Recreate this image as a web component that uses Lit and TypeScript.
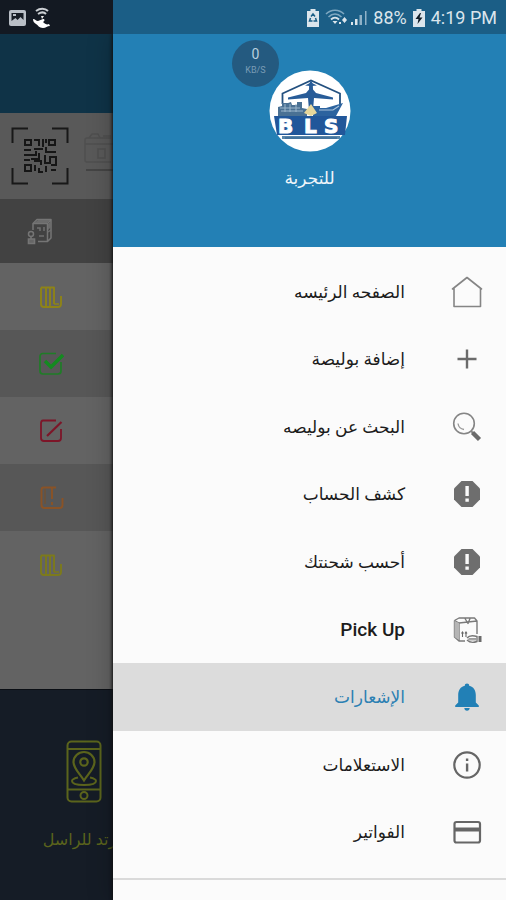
import { LitElement, html, css, svg, nothing } from "lit";
import { customElement } from "lit/decorators.js";
import { classMap } from "lit/directives/class-map.js";

const icon = (w: number, h: number, body: unknown) =>
  html`<svg class="icon" width=${w} height=${h} viewBox="0 0 ${w} ${h}" fill="none" aria-hidden="true">${body}</svg>`;

const alertIcon = icon(32, 32, svg`
  <path d="M10.500 3h11l7.500 7.500v11L21.500 29h-11L3 21.500v-11z" fill="#6e6e6e"/>
  <path d="M14.400 8h3.400v10h-3.400zM14.400 20.500h3.400v3.300h-3.400z" fill="#fafafa"/>`);

const menuIcons = {
  home: icon(32, 32, svg`
    <path d="M1.500 13 16 1.500 30.500 13M3 12v18.500h26.500V12" stroke="#858585" stroke-width="1.600" stroke-linejoin="round" stroke-linecap="round"/>`),
  plus: icon(32, 32, svg`<path d="M16 6.500v19M6.500 16h19" stroke="#6b6b6b" stroke-width="2.400"/>`),
  search: icon(32, 32, svg`
    <circle cx="13" cy="12.500" r="10.300" stroke="#858585" stroke-width="1.600"/>
    <path d="M7 12.500c.500 3.500 2.500 5.500 6 6" stroke="#999" stroke-width="1.300"/>
    <path d="m20 20 3 3" stroke="#858585" stroke-width="1.800"/>
    <path d="m21.500 21.500 7 7" stroke="#6b6b6b" stroke-width="4.400"/>`),
  alert: alertIcon,
  box: icon(32, 32, svg`
    <path d="M3.500 6.500 8 4h15.500L26 7v13M3.500 6.500V23l4.500 4h6M3.500 6.500 8 9l18-2M8 9v18M14 4.500l3 5 2-5" stroke="#7a7a7a" stroke-width="1.400" stroke-linejoin="round"/>
    <path d="M3.500 7 8 9v17l-4.500-3z" fill="#b5b5b5"/>
    <path d="M11.500 18v5M15 18v5M10.500 19.500l1-1.500 1 1.500M14 19.500l1-1.500 1 1.500" stroke="#666" stroke-width="1.100"/>
    <path d="M16 24c2-2.500 5-3 10-1.500v5c-4 1.500-8 .500-10-1.500M18 25h7" stroke="#777" stroke-width="1.400"/>
    <path d="M17 24.500h8v2h-8z" fill="#a5a5a5"/>
    <path d="M27.500 22h3v6h-3z" fill="#6b6b6b"/>`),
  bell: icon(32, 32, svg`
    <path d="M16 2.500c1.300 0 2.200.900 2.200 2.200 4.300 1 6.600 4.500 6.600 9.300v7.500l3 3v1.500H4.200v-1.500l3-3V14c0-4.800 2.300-8.300 6.600-9.300 0-1.300.900-2.200 2.200-2.200z" fill="#2280b6"/>
    <path d="M13.300 27h5.400c0 1.600-1.200 2.700-2.700 2.700s-2.700-1.100-2.700-2.700z" fill="#2280b6"/>`),
  info: icon(32, 32, svg`
    <circle cx="16" cy="16" r="12.700" stroke="#666" stroke-width="2.200"/>
    <path d="M14.900 14.500h2.400v8h-2.400zM14.900 9.500h2.400v2.500h-2.400z" fill="#666"/>`),
  card: icon(32, 32, svg`
    <rect x="3.500" y="6" width="25.500" height="20.500" rx="2" stroke="#666" stroke-width="2.200"/>
    <path d="M3.500 13.500H29" stroke="#666" stroke-width="4"/>`),
};

interface MenuItem {
  label: string;
  icon: keyof typeof menuIcons;
  active?: boolean;
}

const menu: MenuItem[] = [
  { label: "الصفحه الرئيسه", icon: "home" },
  { label: "إضافة بوليصة", icon: "plus" },
  { label: "البحث عن بوليصه", icon: "search" },
  { label: "كشف الحساب", icon: "alert" },
  { label: "أحسب شحنتك", icon: "alert" },
  { label: "Pick Up", icon: "box" },
  { label: "الإشعارات", icon: "bell", active: true },
  { label: "الاستعلامات", icon: "info" },
  { label: "الفواتير", icon: "card" },
];

const boardIcon = (color: string) => icon(26, 26, svg`
  <path d="M3 3.500h13V20M3 3.500V20q0 3 3 3h14q3 0 3-3v-8M8 4v18M12 4v18" stroke=${color} stroke-width="1.900" stroke-linejoin="round"/>
  <path d="M16 20h5" stroke=${color} stroke-width="1.500"/>`);

const rowIcons = [
  boardIcon("#8e8318"),
  icon(26, 26, svg`
    <path d="M18 2.500H5q-3 0-3 3V20q0 3 3 3h15q3 0 3-3v-9" stroke="#1f7d27" stroke-width="1.700"/>
    <path d="m7 10 6 6L25 4" stroke="#148a20" stroke-width="3.400"/>`),
  icon(26, 26, svg`
    <path d="M18 2.500H5q-2 0-2 3V20q0 3 3 3h14q3 0 3-3V11" stroke="#7d1528" stroke-width="1.800"/>
    <path d="M9 18 23.500 4" stroke="#7d1528" stroke-width="2.200"/>`),
  icon(26, 26, svg`
    <path d="M18 2.500H5.500q-2 0-2 2.500v15q0 3 3 3h15q3 0 3-3v-7M14 3v11M14 17v3" stroke="#8a5326" stroke-width="1.900"/>
    <path d="M7 4v15" stroke="#74512f" stroke-width="1.200"/>`),
  boardIcon("#7c7a1c"),
];

const qrIcon = icon(58, 58, svg`
  <path d="M1.500 16V1.500H17M41 1.500h15.500V16M56.500 41v15.500H41M17 56.500H1.500V41" stroke="#181818" stroke-width="2"/>
  <g stroke="#161616" stroke-width="2">
    <rect x="14" y="13" width="6" height="5"/><rect x="38" y="13" width="6" height="5"/><rect x="14" y="38" width="6" height="6"/>
    <path d="M23 13h5v6M32 12v8M35 12v4M13 23h7M23 22h9M35 20v5h10M13 28h12v-4M28 26v6h-8M13 33h6M23 34h7v4M34 28v8h5v-6h6v8h-5M24 38v6M28 41v4h4M35 39v6M40 43h5"/>
  </g>`);

const parcelIcon = icon(30, 48, svg`
  <path d="M2 28V8q0-2 2-2h24M2 12h28M6 6l3-4h6l2 4M20 4h8M2 28q0 2 2 2h24M15 17h7v9h-7z" stroke="#4f4f4f" stroke-width="1.500"/>
  <path d="M3 38h27" stroke="#444" stroke-width="2"/>`);

const boxHeadIcon = icon(28, 28, svg`
  <path d="M7 13V6.500l4-4h14V21l-3.500 3.500H12M7 6.500h14.500v18M21.500 6.500l3.500-4" stroke="#757575" stroke-width="1.500" stroke-linejoin="round"/>
  <path d="m8 6 4-3h12l-3 3zM22 7l3-3v6l-3 3z" fill="#6c6c6c"/>
  <path d="M11 11h3v3M18 10v4M13 19h5M22 15l3-2" stroke="#707070" stroke-width="1.500"/>
  <circle cx="5" cy="17" r="2.500" stroke="#757575" stroke-width="1.500"/>
  <path d="M5 19v3M2.500 22h6v4.500h-6z" stroke="#757575" stroke-width="1.600" fill="#666"/>`);

const phoneIcon = icon(36, 64, svg`
  <rect x="1.500" y="1.500" width="33" height="60" rx="4" stroke="#5b641c" stroke-width="2"/>
  <path d="M2 9h32M2 49.500h32" stroke="#5b641c" stroke-width="2"/>
  <circle cx="18" cy="55.500" r="3.500" stroke="#5b641c" stroke-width="2"/>
  <circle cx="18" cy="22" r="3.700" stroke="#5b641c" stroke-width="2.200"/>
  <path d="M18 40.500C14 34 7.500 28.500 7.500 22a10.500 10 0 0 1 21 0C28.500 28.500 22 34 18 40.500z" stroke="#5b641c" stroke-width="2.200"/>
  <path d="M12 37.500c-3.500.800-6 1.800-6 3.500 0 2.500 5 4 12 4s12-1.500 12-4c0-1.700-2.500-2.700-6-3.500" stroke="#5b641c" stroke-width="2"/>`);

const logo = html`<svg class="logo" width="82" height="82" viewBox="0 0 82 82" role="img" aria-label="BLS">
  <circle cx="41" cy="41" r="40.500" fill="#fff"/>
  <path d="M13.500 34V23.500L42 10.500l29 13V34" fill="none" stroke="#23507f" stroke-width="1.800"/>
  <path d="M42 10.500c1.500 1.500 2 4 2 9l3 3.500 17 4.500v2L45 28l-1 12h-4l-1-12-20 1.500v-2L37 23l3-3.500c0-5 .500-7.500 2-9z" fill="#285c98"/>
  <path d="M36 15.500 41 13v3zM48 15.500 43 13v3z" fill="#285c98"/>
  <path d="M9 46V37l4-1v-3h6l3-1 1 3h5v-3h5v6l5 1v9H9z" fill="#4a7194"/>
  <path d="M11 38h20M12 41h22M16 34v8M21 34v8M27 34v8" stroke="#9bb7cc" stroke-width="1"/>
  <path d="M44 46V36h7v2h6l17-5-7 13z" fill="#2c639f"/>
  <path d="M50 40h14l6-4" stroke="#a9c3dc" stroke-width="1.200" fill="none"/>
  <path d="m35 43 7-9 6 9-6 3z" fill="#e7d79b"/>
  <path d="M5 46h73l-2 19H8z" fill="#21579a"/>
  <path d="M13 66h58v3H13z" fill="#5986aa"/>
  <path d="M16 68h52" stroke="#2f6090" stroke-width="1"/>
  <text class="logo-text" x="9 35 55" y="63">BLS</text>
</svg>`;

@customElement("app-root")
export class AppRoot extends LitElement {
  static styles = css`
    :host {
      display: grid;
      grid-template-columns: 113px minmax(0, 1fr);
      grid-template-rows: 34px 1fr;
      min-height: 100vh;
      background: #fbfbfb;
      font-family: Roboto, "DejaVu Sans", sans-serif;
    }
    .icon, .logo { display: block; flex: none; }
    .logo { direction: ltr; }

    .status {
      grid-column: 1 / -1;
      display: flex;
      align-items: center;
      justify-content: space-between;
      padding: 2px 9px 0 8px;
      background: linear-gradient(to right, #131922 113px, #1b5e86 113px);
      color: #dbe5ec;
      font-size: 18px;
      line-height: 32px;
    }
    .status-group { display: flex; align-items: center; gap: 6px; }

    .screen {
      display: flex;
      flex-direction: column;
      overflow: hidden;
      background: #636363;
    }
    .appbar { flex: none; height: 79px; background: #0f3347; }
    .tools {
      display: flex;
      align-items: center;
      gap: 14px;
      height: 86px;
      padding-left: 11px;
      background: #595959;
    }
    .cell {
      display: flex;
      align-items: center;
      height: 67px;
      padding-left: 38px;
    }
    .cell.head { height: 64px; padding-left: 26px; background: #424242; }
    .cell.alt { background: #575757; }
    .tile {
      flex: 1;
      display: flex;
      flex-direction: column;
      align-items: center;
      gap: 22px;
      width: calc(100vw / 3);
      margin-top: 92px;
      padding-top: 50px;
      box-sizing: border-box;
      background: #151c26;
      box-shadow: 0 -1px 0 #0a0e14;
      color: #5b641c;
      font-size: 16px;
      line-height: 28px;
      text-decoration: none;
      white-space: nowrap;
    }

    .drawer {
      position: relative;
      background: #fbfbfb;
      box-shadow: 0 0 3px 1px #111, 0 0 24px rgba(0, 0, 0, 0.25);
      clip-path: inset(0 0 0 -40px);
    }
    .profile {
      display: flex;
      flex-direction: column;
      align-items: center;
      height: 213px;
      box-sizing: border-box;
      padding-top: 36px;
      background: #2380b5;
      color: #eef5fa;
      font-size: 17px;
      line-height: 28px;
    }
    .profile-name { margin-top: 12px; }
    .logo-text {
      font: bold 20px "DejaVu Sans", sans-serif;
      fill: #fff;
      stroke: #fff;
      stroke-width: 1px;
    }
    .speed {
      position: absolute;
      top: 6px;
      left: 119px;
      display: flex;
      flex-direction: column;
      align-items: center;
      width: 47px;
      height: 47px;
      box-sizing: border-box;
      padding-top: 6px;
      border-radius: 50%;
      background: #245a80;
      color: #b9cfde;
      font-size: 14px;
      line-height: 16px;
    }
    .speed-unit { color: #7a9cb5; font-size: 9px; line-height: 16px; }

    .menu {
      display: grid;
      grid-auto-rows: 1fr;
      height: 608px;
      margin: 11px 0 12px;
      padding: 0;
      list-style: none;
    }
    .item {
      display: flex;
      align-items: center;
      gap: 46px;
      height: 100%;
      box-sizing: border-box;
      padding: 0 23px;
      color: #1c1c1c;
      font-size: 17px;
      line-height: 28px;
      text-decoration: none;
    }
    .item.latin { font-size: 19px; font-weight: 500; }
    .item.active { background: #dcdcdc; color: #2b80b3; }
    .divider { height: 0; margin: 0; border: 0; border-top: 2px solid #dadada; }
  `;

  render() {
    return html`
      <header class="status">
        <div class="status-group">
          ${icon(18, 18, svg`
            <rect x="1" y="1" width="17" height="16" rx="2" fill="#b9bfc6"/>
            <path d="M3.500 4h12v7l-3-3-3 3-2-2-4 3z" fill="#161c24"/><path d="M5 5h3v2H5z" fill="#b9bfc6"/>`)}
          ${icon(20, 22, svg`
            <path d="M4 4c4-3 9-3 12 0M6 7c3-2 6-2 8 0" stroke="#ccd0d4" stroke-width="2"/>
            <path d="M9 9h3l-2 3z" fill="#eee"/>
            <path d="M1 12c2 0 3 2 5 2l5-2c2 0 2 2 0 3 2 2 4 3 6 2l1 2c-3 0-4 2-7 2-4 0-5-3-7-4-2-1-3-3-3-5z" fill="#fff"/>`)}
        </div>
        <div class="status-group">
          ${icon(12, 18, svg`
            <path d="M3.500 0h5v2H12v16H0V2h3.500z" fill="#dbe5ec"/>
            <path d="M4 7.500 6 5l2 2.500M3.500 9 2.500 12h3M8.500 9l1 3h-3" stroke="#1b5e86" stroke-width="1.500"/>`)}
          ${icon(42, 20, svg`
            <path d="M1 6c5-5 13-5 18 0M3.500 9c4-4 9-4 13 0" stroke="#7fa8c1" stroke-width="1.500"/>
            <path d="M6 11.500c2.500-2.500 5.500-2.500 8 0" stroke="#dbe5ec" stroke-width="1.800"/>
            <path d="m7.500 13 2.500 3 2.500-3zM17 12l2.500-3 2.500 3-2.500 3zM14 14h2v2h-2z" fill="#dbe5ec"/>
            <path d="M26 14h2v3h-2zM30 11h2.500v6H30z" fill="#dbe5ec"/>
            <path d="M34.500 7H37v10h-2.500zM40 3h1.500v14H40z" fill="#8fb2c8"/>`)}
          <span>88%</span>
          ${icon(12, 18, svg`
            <path d="M3.500 0h5v2H12v16H0V2h3.500z" fill="#dbe5ec"/>
            <path d="M7 4 2.500 10h3L4.500 15 9.500 8.500h-3L8 4z" fill="#101c26"/>`)}
          <span>4:19 PM</span>
        </div>
      </header>

      <main class="screen">
        <div class="appbar"></div>
        <div class="tools">${qrIcon}${parcelIcon}</div>
        <div class="cell head">${boxHeadIcon}</div>
        ${rowIcons.map((glyph, i) => html`<div class=${classMap({ cell: true, alt: i % 2 === 1 })}>${glyph}</div>`)}
        <a class="tile" href="#returned" dir="rtl">${phoneIcon}<span>مرتد للراسل</span></a>
      </main>

      <aside class="drawer" dir="rtl">
        <div class="profile">
          ${logo}
          <span class="profile-name">للتجربة</span>
        </div>
        <div class="speed" dir="ltr"><span>0</span><span class="speed-unit">KB/S</span></div>
        <nav>
          <ul class="menu">
            ${menu.map((m) => html`<li>
              <a
                class=${classMap({ item: true, active: !!m.active, latin: m.icon === "box" })}
                href="#${m.icon}"
                aria-current=${m.active ? "page" : nothing}
              >${menuIcons[m.icon]}<span>${m.label}</span></a>
            </li>`)}
          </ul>
        </nav>
        <hr class="divider" />
      </aside>
    `;
  }
}
